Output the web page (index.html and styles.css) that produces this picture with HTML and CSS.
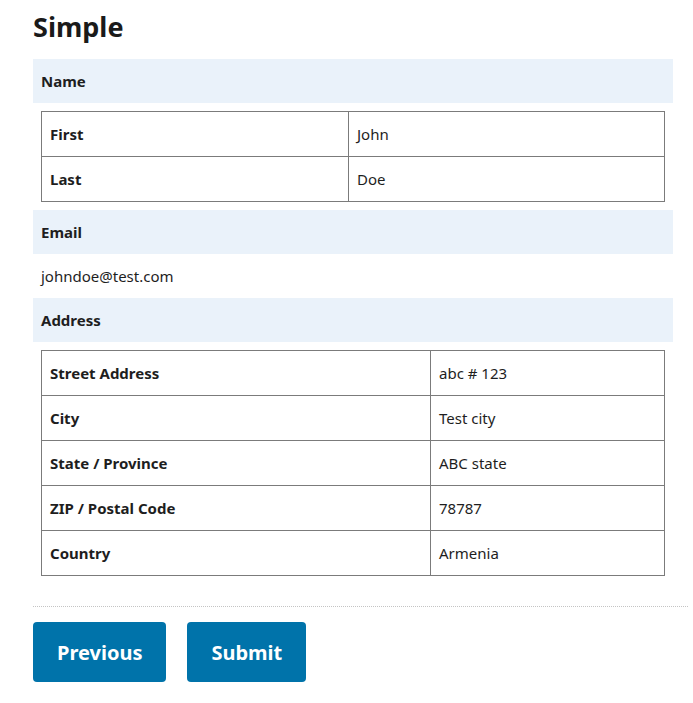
FILE: index.html
```html
<!DOCTYPE html>
<html lang="en">
<head>
  <meta charset="UTF-8">
  <link rel="stylesheet" href="styles.css">
</head>
<body>

<div class="page">
  <h1 class="title">Simple</h1>

  <div class="entry">
    <div class="label">Name</div>
    <div class="value">
      <table class="grid grid-name">
        <tr><th>First</th><td>John</td></tr>
        <tr><th>Last</th><td>Doe</td></tr>
      </table>
    </div>

    <div class="label">Email</div>
    <div class="value text">johndoe@test.com</div>

    <div class="label">Address</div>
    <div class="value">
      <table class="grid grid-address">
        <tr><th>Street Address</th><td>abc # 123</td></tr>
        <tr><th>City</th><td>Test city</td></tr>
        <tr><th>State / Province</th><td>ABC state</td></tr>
        <tr><th>ZIP / Postal Code</th><td>78787</td></tr>
        <tr><th>Country</th><td>Armenia</td></tr>
      </table>
    </div>
  </div>

  <div class="footer">
    <button class="btn">Previous</button>
    <button class="btn">Submit</button>
  </div>
</div>

</body>
</html>
```

FILE: styles.css
```css
body {
  margin: 0;
  font-family: "Noto Sans", "Open Sans", sans-serif;
  font-size: 15px;
  color: #1e1e1e;
  background: #fff;
}

.page { padding: 0 5px 0 33px; }

.title {
  margin: 0;
  padding-top: 9px;
  font-size: 27px;
  line-height: 36px;
  font-weight: 700;
  color: #1a1a1a;
}

.entry { width: 640px; margin-top: 14px; }

.label {
  background: #eaf2fa;
  height: 44px;
  line-height: 44px;
  padding-left: 8px;
  font-weight: 700;
}

.value { padding: 8px 8px 8px 8px; }
.value.text { padding: 0 8px; height: 44px; line-height: 44px; }

.grid {
  width: 100%;
  border-collapse: collapse;
  table-layout: fixed;
}
.grid th, .grid td {
  border: 1px solid #7b7b7b;
  height: 44px;
  padding: 0 8px;
  text-align: left;
  vertical-align: middle;
}
.grid th { font-weight: 700; }
.grid-name th { width: 290px; }
.grid-address th { width: 372px; }

.footer {
  margin-top: 22px;
  border-top: 1px dotted #c4c4c4;
  padding-top: 15px;
  display: flex;
  gap: 21px;
}

.btn {
  height: 60px;
  padding: 0 24px;
  border: none;
  border-radius: 4px;
  background: #0073aa;
  color: #fff;
  font-family: inherit;
  font-size: 20px;
  font-weight: 700;
  cursor: pointer;
}
```
